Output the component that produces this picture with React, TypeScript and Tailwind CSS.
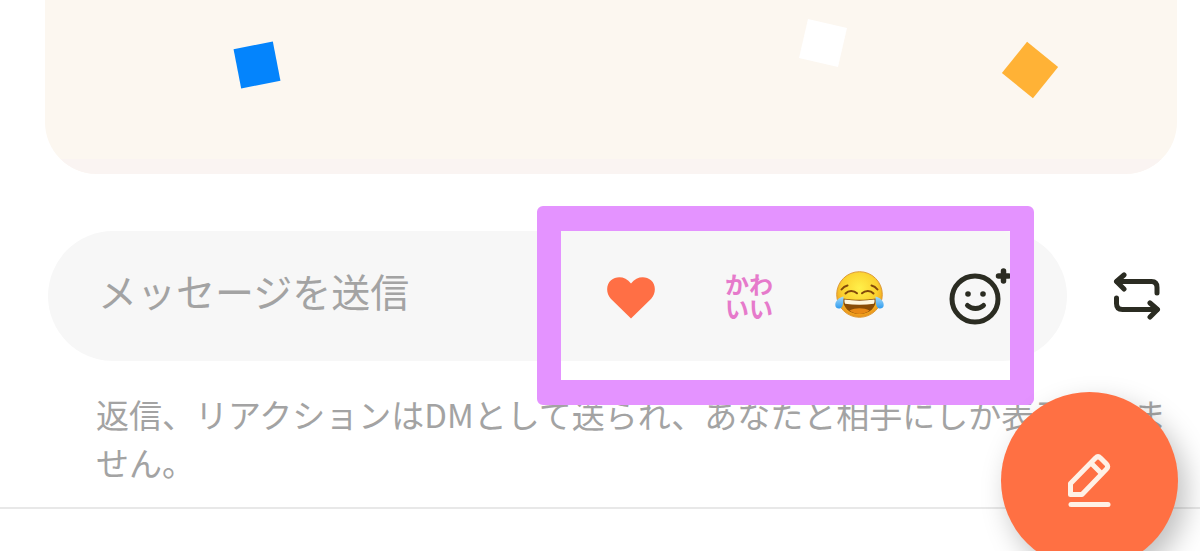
import { useState } from 'react';

function HeartIcon() {
  return (
    <svg viewBox="0 0 48 46" className="w-12 h-[46px]" fill="#ff6f45" aria-hidden="true">
      <path d="M24 45.5 3.8 25.8C-1.2 20.5-1 11.5 4 7.3 9.5 2.7 18.5 3.200 24 10.5 29.5 3.2 38.5 2.7 44 7.3c5 4.2 5.2 13.2.2 18.5Z" />
    </svg>
  );
}

function JoyIcon() {
  return (
    <svg viewBox="0 0 50 50" className="w-[50px] h-[50px]" aria-hidden="true">
      <defs>
        <radialGradient id="joyFace" cx="0.5" cy="0.36" r="0.66">
          <stop offset="0" stopColor="#fff04a" />
          <stop offset="0.6" stopColor="#fbd02f" />
          <stop offset="1" stopColor="#e98a16" />
        </radialGradient>
        <linearGradient id="joyTear" x1="0" y1="0" x2="0" y2="1">
          <stop offset="0" stopColor="#a5dcfb" />
          <stop offset="1" stopColor="#2f9bee" />
        </linearGradient>
      </defs>
      <circle cx="24.5" cy="23.5" r="22.8" fill="url(#joyFace)" stroke="#dd9a35" />
      <g fill="none" stroke="#83490b" strokeWidth="2" strokeLinecap="round">
        <path d="M6.5 18.5c1.5-2 3.500-3.5 6-4" />
        <path d="M42.5 18.5c-1.5-2-3.5-3.5-6-4" />
        <path d="M10.500 22.5c3-3.200 8-3.500 11.500-.2" />
        <path d="M38.5 22.500c-3-3.200-8-3.500-11.500-.2" />
      </g>
      <path d="M8 27.500c10 1.800 23 1.800 33 0 .5 9-6.5 15.500-16.500 15.500S7.500 36.500 8 27.500Z" fill="#8a4d06" />
      <path d="M9.5 28.5c9.500 1.500 20.500 1.500 30 0 .2 1.700 0 3-.6 4.200-9.300 1.400-19.500 1.400-28.800 0-.6-1.200-.8-2.500-.6-4.200Z" fill="#fff6dc" />
      <path d="M14.5 39.5c6-3 14-3 20 0-5.500 4.500-14.500 4.500-20 0Z" fill="#e98a16" />
      <path d="M8.500 25.500C4 26.500 0 30 .3 34.300c.2 3.700 4.900 4.500 6.800 1.400C8.500 33 8.500 29 8.500 25.500Z" fill="url(#joyTear)" />
      <path d="M40.500 25.500c4.500 1 8.500 4.500 8.200 8.800-.2 3.700-4.900 4.500-6.800 1.400-1.400-2.700-1.400-6.700-1.400-10.200Z" fill="url(#joyTear)" />
    </svg>
  );
}

function AddReactionIcon() {
  return (
    <svg viewBox="0 0 64 64" className="w-16 h-16" fill="none" stroke="#2b2c22" strokeWidth="5" strokeLinecap="round" aria-hidden="true">
      <circle cx="28" cy="35" r="23" />
      <path d="M20.500 41.500c4.500 4 11.500 4 16 0" />
      <path d="M56.500 7v10M51.500 12h10" strokeWidth="5.500" />
      <circle cx="21" cy="30" r="2.800" fill="#2b2c22" stroke="none" />
      <circle cx="36" cy="30" r="2.800" fill="#2b2c22" stroke="none" />
    </svg>
  );
}

function RepostIcon() {
  return (
    <svg viewBox="0 0 48 48" className="w-12 h-12" fill="none" stroke="#2b2c22" strokeWidth="5" strokeLinecap="round" strokeLinejoin="round" aria-hidden="true">
      <path d="M11 3 3.500 9.500 11 17" />
      <path d="M4 9.500h34.500q5.500 0 5.500 6V21" />
      <path d="M37 31l7.500 6.500-7.500 7.500" />
      <path d="M44 37.500H9.500q-6 0-6-6V26" />
    </svg>
  );
}

function PencilIcon() {
  return (
    <svg viewBox="0 0 48 58" className="w-12 h-[58px]" fill="none" stroke="#fff1e6" strokeWidth="5" strokeLinecap="round" strokeLinejoin="round" aria-hidden="true">
      <path d="M4.500 42.500V31.500L29.500 6q2.500-2.500 5 0l6 6q2.500 2.500 0 5L16 42.500Z" />
      <path d="M25.500 11.500l10 10" />
      <path d="M5 52.500h37" />
    </svg>
  );
}

export default function App() {
  const [message, setMessage] = useState('');

  return (
    <div className="relative min-h-screen overflow-hidden bg-white font-['Noto_Sans_CJK_JP',sans-serif] text-[#a3a3a3]">
      {/* Story card with confetti */}
      <section className="relative ml-[45px] mr-[23px] flex h-[174px] flex-col justify-end overflow-hidden rounded-b-[52px] bg-[#fcf7f0]">
        <div className="h-[15px] bg-[#faf4f2]" />
        <span className="absolute left-[17%] top-[45px] size-10 -rotate-11 bg-[#0484fc]" />
        <span className="absolute left-[67%] top-[23px] size-10 rotate-13 bg-white" />
        <span className="absolute right-[127px] top-[50px] size-10 rotate-39 bg-[#ffb236]" />
      </section>

      {/* Message composer */}
      <form onSubmit={e => e.preventDefault()} className="mt-[57px] ml-12 mr-[39px] flex items-center gap-[46px]">
        <div className="relative flex h-[130px] min-w-0 flex-1 items-center rounded-full bg-[#f7f7f7] pl-[50px] pr-14">
          <input
            type="text"
            aria-label="メッセージを送信"
            placeholder="メッセージを送信"
            value={message}
            onChange={e => setMessage(e.target.value)}
            className="h-16 min-w-0 flex-1 bg-transparent pb-3 text-[39px] text-[#2b2c22] outline-none placeholder:text-[#a3a3a3]"
          />
          <div className="flex shrink-0 items-center gap-[62px]">
            <button type="button" aria-label="ハート" className="mr-2 cursor-pointer">
              <HeartIcon />
            </button>
            <button type="button" className="w-12 cursor-pointer text-2xl leading-6 font-bold break-all text-[#e67acb]">
              かわいい
            </button>
            <button type="button" aria-label="うれし泣き" className="cursor-pointer">
              <JoyIcon />
            </button>
            <button type="button" aria-label="リアクションを追加" className="cursor-pointer">
              <AddReactionIcon />
            </button>
          </div>

          {/* Highlight around the reactions */}
          <div className="pointer-events-none absolute -top-[25px] right-[33px] z-10 h-[199px] w-[497px] rounded-md border-x-24 border-y-25 border-[#e493ff]" />
        </div>
        <button type="button" aria-label="リポスト" className="shrink-0 cursor-pointer">
          <RepostIcon />
        </button>
      </form>

      <p className="mt-[29px] ml-24 mr-6 text-[33px] leading-12">
        返信、リアクションはDMとして送られ、あなたと相手にしか表示されません。
      </p>
      <hr className="mt-[21px] border-t-2 border-[#e8e8e8]" />

      <button
        type="button"
        aria-label="新規作成"
        className="fixed right-[22px] -bottom-[18px] z-20 flex size-[177px] cursor-pointer items-center justify-center rounded-full bg-[#ff7043] shadow-[8px_12px_28px_rgba(0,0,0,0.25)]"
      >
        <PencilIcon />
      </button>
    </div>
  );
}
